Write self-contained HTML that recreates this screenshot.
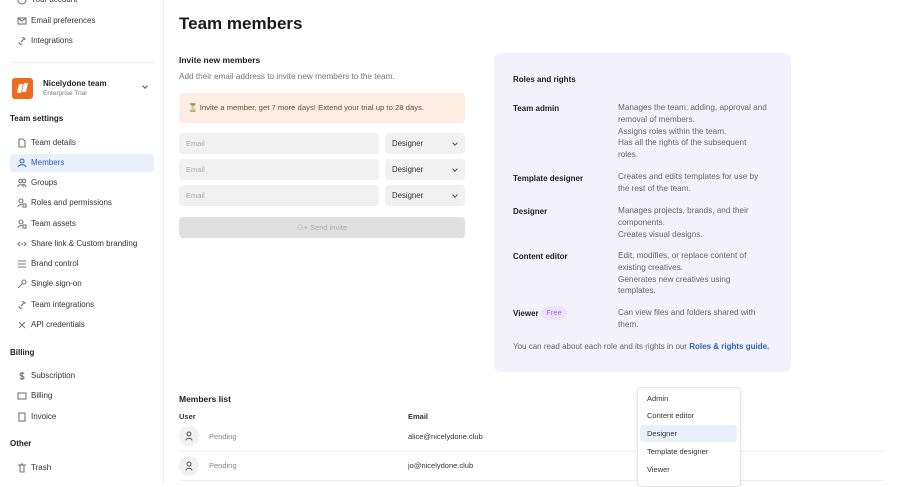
<!DOCTYPE html>
<html><head><meta charset="utf-8"><style>
*{box-sizing:border-box;margin:0;padding:0}
body{width:900px;height:484px;overflow:hidden;background:#fff;font-family:"Liberation Sans",sans-serif;color:#222;position:relative;font-size:8px}
.a{position:absolute;white-space:nowrap}
.side{position:absolute;left:0;top:0;width:164px;height:484px;border-right:1px solid #eee}
.it{position:absolute;left:10px;width:144px;height:18px;line-height:18px;padding-left:21px;font-size:8px;color:#333;border-radius:4px}
.it svg{position:absolute;left:7px;top:4px;width:10px;height:10px;fill:none;stroke:#777;stroke-width:1.1}
.hd{position:absolute;left:10px;font-size:8px;font-weight:bold;color:#222}
.inp{position:absolute;left:179px;width:200px;height:21px;background:#f1f1f1;border-radius:4px;color:#aaa;font-size:7.5px;line-height:21px;padding-left:7px}
.sel{position:absolute;left:385px;width:80px;height:21px;background:#f1f1f1;border-radius:4px;color:#333;font-size:7.8px;line-height:21px;padding-left:7px}
.sel:after{content:"";position:absolute;right:8px;top:8px;width:3px;height:3px;border-right:1px solid #555;border-bottom:1px solid #555;transform:rotate(45deg)}
.rt{position:absolute;left:513px;font-weight:bold;font-size:8px;color:#222}
.rd{position:absolute;left:618px;font-size:8.2px;color:#666;line-height:11.8px}
.dd{position:absolute;left:647px;font-size:7.5px;color:#333}
.av{position:absolute;left:179px;width:20px;height:20px;border-radius:50%;background:#f1f1f1}
.av svg{position:absolute;left:5px;top:5px;width:10px;height:10px;fill:none;stroke:#555;stroke-width:1}
</style></head><body>
<div class="side">
<div class="it" style="top:-9px"><svg viewBox="0 0 10 10"><circle cx="5" cy="5" r="4"/></svg>Your account</div>
<div class="it" style="top:12px"><svg viewBox="0 0 10 10"><rect x="1" y="2" width="8" height="6"/><path d="M1 2l4 3 4-3"/></svg>Email preferences</div>
<div class="it" style="top:32px"><svg viewBox="0 0 10 10"><path d="M4 6l3-3M2 6a2 2 0 0 0 3 2M8 4a2 2 0 0 0-3-2"/></svg>Integrations</div>
<div class="a" style="left:12px;top:62px;width:142px;height:1px;background:#eee"></div>
<div class="a" style="left:12px;top:78px;width:21px;height:21px;background:#f06a1d;border-radius:3px"><div class="a" style="left:6px;top:6px;width:4px;height:9px;background:#fff;transform:skewX(-12deg)"></div><div class="a" style="left:11px;top:5px;width:4px;height:9px;background:#fff;transform:skewX(-12deg)"></div></div>
<div class="a" style="left:43px;top:79px;font-size:8px;font-weight:bold">Nicelydone team</div>
<div class="a" style="left:43px;top:90px;font-size:6.5px;color:#777">Enterprise Trial</div>
<div class="a" style="left:143px;top:84px;width:4px;height:4px;border-right:1px solid #555;border-bottom:1px solid #555;transform:rotate(45deg)"></div>
<div class="hd" style="top:114px">Team settings</div>
<div class="it" style="top:134px"><svg viewBox="0 0 10 10"><path d="M2 1h4l2 2v6H2z"/></svg>Team details</div>
<div class="it" style="top:154px;background:#e9effb;color:#2a5fc2"><svg viewBox="0 0 10 10" style="stroke:#2a5fc2"><circle cx="5" cy="3" r="2"/><path d="M1 9c1-3 7-3 8 0"/></svg>Members</div>
<div class="it" style="top:174px"><svg viewBox="0 0 10 10"><circle cx="3.5" cy="3" r="1.7"/><circle cx="7" cy="3" r="1.7"/><path d="M0.5 9c1-3 5-3 6 0M5 7c1-1 3-1 4 2"/></svg>Groups</div>
<div class="it" style="top:194px"><svg viewBox="0 0 10 10"><circle cx="4" cy="3" r="2"/><path d="M1 9c0-2 3-3 4-2"/><rect x="6" y="6" width="3" height="3"/></svg>Roles and permissions</div>
<div class="it" style="top:215px"><svg viewBox="0 0 10 10"><circle cx="4" cy="3" r="2"/><path d="M1 9c0-2 3-3 4-2"/><rect x="6" y="6" width="3" height="3"/></svg>Team assets</div>
<div class="it" style="top:235px"><svg viewBox="0 0 10 10"><path d="M3 3L1 5l2 2M7 3l2 2-2 2M4 5h2"/></svg>Share link &amp; Custom branding</div>
<div class="it" style="top:255px"><svg viewBox="0 0 10 10"><path d="M1 2h8M1 5h8M1 8h8"/></svg>Brand control</div>
<div class="it" style="top:275px"><svg viewBox="0 0 10 10"><circle cx="7" cy="3" r="2"/><path d="M5.5 4.5L1 9"/></svg>Single sign-on</div>
<div class="it" style="top:296px"><svg viewBox="0 0 10 10"><path d="M4 6l3-3M2 6a2 2 0 0 0 3 2M8 4a2 2 0 0 0-3-2"/></svg>Team integrations</div>
<div class="it" style="top:316px"><svg viewBox="0 0 10 10"><path d="M2 2l6 6M8 2L2 8"/></svg>API credentials</div>
<div class="hd" style="top:348px">Billing</div>
<div class="it" style="top:367px"><svg viewBox="0 0 10 10"><path d="M7 3C6 1 3 2 3 3.5S7 5 7 6.5 4 9 3 7M5 1v8"/></svg>Subscription</div>
<div class="it" style="top:387px"><svg viewBox="0 0 10 10"><rect x="1" y="2" width="8" height="6"/></svg>Billing</div>
<div class="it" style="top:408px"><svg viewBox="0 0 10 10"><rect x="2" y="1" width="6" height="8"/></svg>Invoice</div>
<div class="hd" style="top:439px">Other</div>
<div class="it" style="top:459px"><svg viewBox="0 0 10 10"><path d="M1 2h8M3 2v7h4V2M4 1h2"/></svg>Trash</div>
</div>

<div class="a" style="left:179px;top:14px;font-size:17px;font-weight:bold;color:#1a1a1a">Team members</div>
<div class="a" style="left:179px;top:55px;font-size:8.5px;font-weight:bold">Invite new members</div>
<div class="a" style="left:179px;top:72px;font-size:8.2px;color:#777">Add their email address to invite new members to the team.</div>
<div class="a" style="left:179px;top:93px;width:286px;height:30px;background:#fdede3;border-radius:4px;font-size:7.7px;color:#6a4b3a;line-height:30px;padding-left:9px">⏳ Invite a member, get 7 more days! Extend your trial up to 28 days.</div>
<div class="inp" style="top:133px">Email</div><div class="sel" style="top:133px">Designer</div>
<div class="inp" style="top:159px">Email</div><div class="sel" style="top:159px">Designer</div>
<div class="inp" style="top:185px">Email</div><div class="sel" style="top:185px">Designer</div>
<div class="a" style="left:179px;top:217px;width:286px;height:21px;background:#e0e0e0;border-radius:4px;color:#aaa;font-size:7.5px;line-height:21px;text-align:center">⚇+ Send invite</div>

<div class="a" style="left:494px;top:53px;width:297px;height:319px;background:#f3f1fb;border-radius:7px"></div>
<div class="rt" style="top:75px">Roles and rights</div>
<div class="rt" style="top:104px">Team admin</div>
<div class="rd" style="top:102px">Manages the team: adding, approval and<br>removal of members.<br>Assigns roles within the team.<br>Has all the rights of the subsequent<br>roles.</div>
<div class="rt" style="top:174px">Template designer</div>
<div class="rd" style="top:171px">Creates and edits templates for use by<br>the rest of the team.</div>
<div class="rt" style="top:207px">Designer</div>
<div class="rd" style="top:205px">Manages projects, brands, and their<br>components.<br>Creates visual designs.</div>
<div class="rt" style="top:252px">Content editor</div>
<div class="rd" style="top:250px">Edit, modifies, or replace content of<br>existing creatives.<br>Generates new creatives using<br>templates.</div>
<div class="rt" style="top:309px">Viewer</div>
<div class="a" style="left:541px;top:306px;width:26px;height:14px;background:#ece3fb;border-radius:7px;color:#9b6ad6;font-size:7.5px;line-height:14px;text-align:center">Free</div>
<div class="rd" style="top:307px">Can view files and folders shared with<br>them.</div>
<div class="a" style="left:513px;top:342px;font-size:8px;color:#666">You can read about each role and its rights in our <b style="color:#2a5fc2">Roles &amp; rights guide.</b></div>

<div class="a" style="left:179px;top:394px;font-size:8.5px;font-weight:bold">Members list</div>
<div class="a" style="left:179px;top:412px;font-size:7.5px;font-weight:bold;color:#333">User</div>
<div class="a" style="left:408px;top:412px;font-size:7.5px;font-weight:bold;color:#333">Email</div>
<div class="av" style="top:426px"><svg viewBox="0 0 10 10"><circle cx="5" cy="3" r="2"/><path d="M2 9.5c0-3 6-3 6 0"/></svg></div>
<div class="a" style="left:209px;top:432px;font-size:7.5px;color:#888">Pending</div>
<div class="a" style="left:408px;top:432px;font-size:7.5px;color:#333">alice@nicelydone.club</div>
<div class="a" style="left:179px;top:451px;width:706px;height:1px;background:#eee"></div>
<div class="av" style="top:456px"><svg viewBox="0 0 10 10"><circle cx="5" cy="3" r="2"/><path d="M2 9.5c0-3 6-3 6 0"/></svg></div>
<div class="a" style="left:209px;top:461px;font-size:7.5px;color:#888">Pending</div>
<div class="a" style="left:408px;top:461px;font-size:7.5px;color:#333">jo@nicelydone.club</div>
<div class="a" style="left:179px;top:480px;width:706px;height:1px;background:#eee"></div>

<div class="a" style="left:637px;top:387px;width:104px;height:100px;background:#fff;border:1px solid #e6e6e6;border-radius:4px;box-shadow:0 2px 6px rgba(0,0,0,.06)"></div>
<div class="a" style="left:640px;top:425px;width:97px;height:17px;background:#eaf0fb;border-radius:3px"></div>
<div class="dd" style="top:394px">Admin</div>
<div class="dd" style="top:411px">Content editor</div>
<div class="dd" style="top:429px">Designer</div>
<div class="dd" style="top:447px">Template designer</div>
<div class="dd" style="top:465px">Viewer</div>
</body></html>
